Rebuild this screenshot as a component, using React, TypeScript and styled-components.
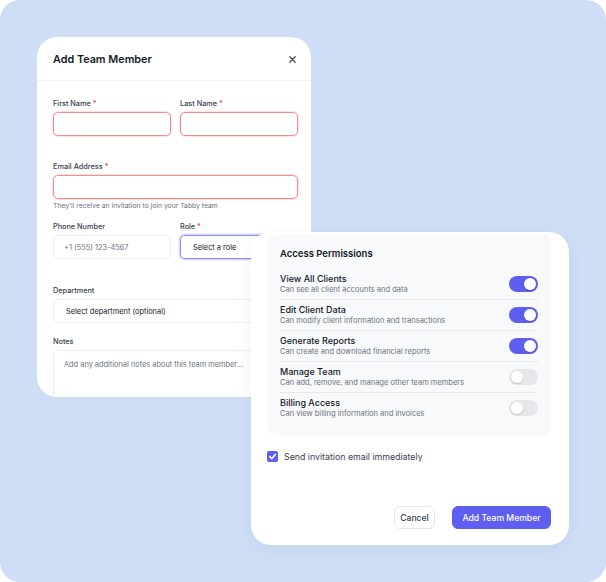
import styled, { createGlobalStyle } from "styled-components";

const GlobalStyle = createGlobalStyle`
  html, body {
    margin: 0;
    padding: 0;
    background: #ffffff;
  }
  body {
    font-family: Inter, "Noto Sans", "Liberation Sans", sans-serif;
    color: #111827;
    -webkit-font-smoothing: antialiased;
  }
  * {
    box-sizing: border-box;
  }
`;

type Permission = {
  title: string;
  text: string;
  on: boolean;
};

const permissions: Permission[] = [
  { title: "View All Clients", text: "Can see all client accounts and data", on: true },
  { title: "Edit Client Data", text: "Can modify client information and transactions", on: true },
  { title: "Generate Reports", text: "Can create and download financial reports", on: true },
  { title: "Manage Team", text: "Can add, remove, and manage other team members", on: false },
  { title: "Billing Access", text: "Can view billing information and invoices", on: false },
];

const Required = () => <Star>*</Star>;

export default function App() {
  return (
    <>
      <GlobalStyle />
      <Stage>
        <FormCard>
          <Header>
            <Title>Add Team Member</Title>
            <Close aria-label="close">
              <svg width="7" height="7" viewBox="0 0 7 7">
                <path d="M0.8 0.8 L6.2 6.2 M6.2 0.8 L0.8 6.2" stroke="#4b5563" strokeWidth="1.3" strokeLinecap="round" />
              </svg>
            </Close>
          </Header>

          <Body>
            <Row $after={25}>
              <Field>
                <Label>
                  First Name <Required />
                </Label>
                <Input $state="error" />
              </Field>
              <Field>
                <Label>
                  Last Name <Required />
                </Label>
                <Input $state="error" />
              </Field>
            </Row>

            <Field $after={11}>
              <Label>
                Email Address <Required />
              </Label>
              <Input $state="error" />
              <Hint>They'll receive an invitation to join your Tabby team</Hint>
            </Field>

            <Row $after={26}>
              <Field>
                <Label>Phone Number</Label>
                <Input>
                  <Placeholder>+1 (555) 123-4567</Placeholder>
                </Input>
              </Field>
              <Field>
                <Label>
                  Role <Required />
                </Label>
                <Input $state="focus" $pad={12}>
                  Select a role
                </Input>
              </Field>
            </Row>

            <Field $after={13}>
              <Label>Department</Label>
              <Input $pad={12}>Select department (optional)</Input>
            </Field>

            <Field>
              <Label>Notes</Label>
              <TextArea>
                <Placeholder>Add any additional notes about this team member...</Placeholder>
              </TextArea>
            </Field>
          </Body>
        </FormCard>

        <AccessCard>
          <Panel>
            <PanelTitle>Access Permissions</PanelTitle>
            {permissions.map((p) => (
              <PermRow key={p.title}>
                <PermInfo>
                  <PermTitle>{p.title}</PermTitle>
                  <PermText>{p.text}</PermText>
                </PermInfo>
                <Toggle $on={p.on}>
                  <Knob />
                </Toggle>
              </PermRow>
            ))}
          </Panel>

          <CheckRow>
            <CheckBox>
              <svg width="9" height="9" viewBox="0 0 10 10">
                <path d="M2 5.2 L4.2 7.4 L8.2 2.6" stroke="#fff" strokeWidth="1.8" fill="none" strokeLinecap="round" strokeLinejoin="round" />
              </svg>
            </CheckBox>
            <CheckLabel>Send invitation email immediately</CheckLabel>
          </CheckRow>

          <Actions>
            <Button $w={41}>Cancel</Button>
            <Button $w={99} $primary>
              Add Team Member
            </Button>
          </Actions>
        </AccessCard>
      </Stage>
    </>
  );
}

const Stage = styled.div`
  position: relative;
  width: 606px;
  height: 582px;
  background: #cddef6;
  border-radius: 20px;
  overflow: hidden;
`;

const Card = styled.div`
  position: absolute;
  background: #ffffff;
  border-radius: 20px;
  overflow: hidden;
`;

const FormCard = styled(Card)`
  left: 37px;
  top: 37px;
  width: 274px;
  height: 360px;
`;

const Header = styled.div`
  height: 44px;
  padding: 2px 15px 0 16px;
  display: flex;
  align-items: center;
  justify-content: space-between;
  border-bottom: 1px solid #f0f1f3;
`;

const Title = styled.h2`
  margin: 0;
  font-size: 10.8px;
  font-weight: 600;
  color: #111827;
`;

const Close = styled.button`
  border: 0;
  background: none;
  padding: 0;
  display: flex;
  cursor: pointer;
`;

const Body = styled.div`
  padding: 17px 13px 0 16px;
  display: flex;
  flex-direction: column;
`;

const Row = styled.div<{ $after?: number }>`
  display: grid;
  grid-template-columns: 1fr 1fr;
  column-gap: 9px;
  margin-bottom: ${(p) => p.$after ?? 0}px;
`;

const Field = styled.div<{ $after?: number }>`
  display: flex;
  flex-direction: column;
  margin-bottom: ${(p) => p.$after ?? 0}px;
`;

const Label = styled.label`
  font-size: 7.3px;
  line-height: 12px;
  font-weight: 500;
  color: #374151;
  margin-bottom: 2px;
`;

const Star = styled.span`
  color: #ef4444;
`;

const borders = {
  error: "border-color: #f58b8b; box-shadow: 0 0 0 1px rgba(252, 165, 165, 0.35);",
  focus: "border-color: #8b8ff5; box-shadow: 0 0 0 1.5px rgba(165, 170, 250, 0.45);",
  idle: "border-color: #eceef1;",
};

const Input = styled.div<{ $state?: "error" | "focus"; $pad?: number }>`
  height: 24px;
  border: 1px solid;
  ${(p) => borders[p.$state ?? "idle"]}
  border-radius: 5px;
  padding: 0 ${(p) => p.$pad ?? 10}px;
  display: flex;
  align-items: center;
  font-size: 7.4px;
  color: #111827;
  white-space: nowrap;
`;

const Placeholder = styled.span`
  color: #6b7280;
`;

const Hint = styled.p`
  margin: 2px 0 0;
  font-size: 6.8px;
  line-height: 9px;
  color: #6b7280;
`;

const TextArea = styled.div`
  height: 60px;
  border: 1px solid #eceef1;
  border-radius: 5px;
  padding: 8px 10px;
  font-size: 7.4px;
  line-height: 11px;
`;

const AccessCard = styled(Card)`
  left: 251px;
  top: 232px;
  width: 318px;
  height: 313px;
  padding: 3px 18px 0 16px;
  box-shadow: 0 4px 18px rgba(30, 41, 59, 0.05);
  display: flex;
  flex-direction: column;
`;

const Panel = styled.div`
  background: #f8f9fb;
  border-radius: 8px;
  padding: 12px 13px;
`;

const PanelTitle = styled.h3`
  margin: 0 0 8px;
  font-size: 9.5px;
  line-height: 14px;
  font-weight: 600;
  color: #111827;
`;

const PermRow = styled.div`
  display: flex;
  align-items: center;
  justify-content: space-between;
  padding: 4px 0;
  & + & {
    border-top: 1px solid #e7e9ed;
  }
`;

const PermInfo = styled.div`
  display: flex;
  flex-direction: column;
`;

const PermTitle = styled.span`
  font-size: 9px;
  line-height: 12px;
  font-weight: 500;
  color: #111827;
`;

const PermText = styled.span`
  font-size: 7.5px;
  line-height: 10px;
  color: #6b7280;
`;

const Toggle = styled.div<{ $on: boolean }>`
  width: 29px;
  height: 16px;
  border-radius: 8px;
  padding: 2px;
  background: ${(p) => (p.$on ? "#5e5ff0" : "#e5e7eb")};
  display: flex;
  justify-content: ${(p) => (p.$on ? "flex-end" : "flex-start")};
`;

const Knob = styled.span`
  width: 12px;
  height: 12px;
  border-radius: 50%;
  background: #ffffff;
  box-shadow: 0 1px 2px rgba(0, 0, 0, 0.15);
`;

const CheckRow = styled.label`
  display: flex;
  align-items: center;
  gap: 6px;
  margin-top: 16px;
`;

const CheckBox = styled.span`
  width: 11px;
  height: 11px;
  border-radius: 2px;
  background: #5e5ff0;
  display: flex;
  align-items: center;
  justify-content: center;
`;

const CheckLabel = styled.span`
  font-size: 8.8px;
  color: #374151;
`;

const Actions = styled.div`
  margin-top: auto;
  margin-bottom: 16px;
  display: flex;
  justify-content: flex-end;
  gap: 17px;
`;

const Button = styled.button<{ $primary?: boolean; $w: number }>`
  width: ${(p) => p.$w}px;
  height: 23px;
  padding: 0;
  border-radius: 6px;
  font-family: inherit;
  font-size: 8.6px;
  font-weight: 500;
  border: 1px solid ${(p) => (p.$primary ? "#5e5ff0" : "#e5e7eb")};
  background: ${(p) => (p.$primary ? "#5e5ff0" : "#ffffff")};
  color: ${(p) => (p.$primary ? "#ffffff" : "#374151")};
  cursor: pointer;
`;
